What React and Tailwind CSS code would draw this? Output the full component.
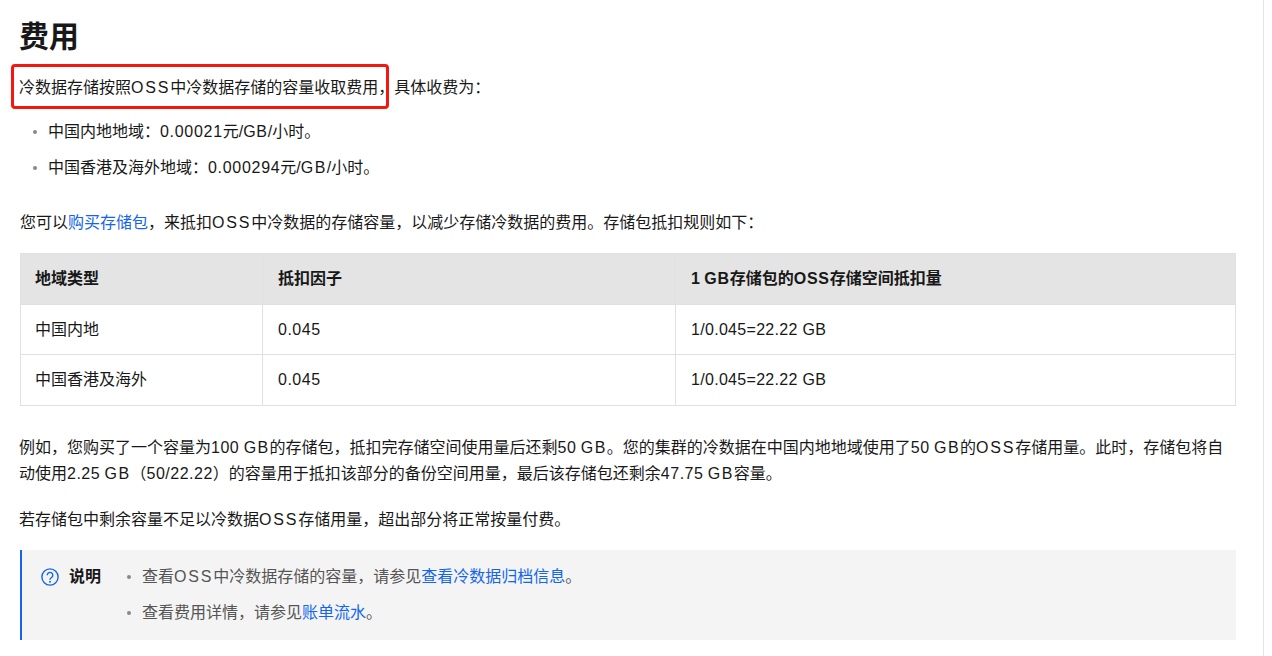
function Help() {
  return (
    <svg width="18" height="18" viewBox="0 0 18 18" fill="none" className="shrink-0">
      <circle cx="9" cy="9" r="8.1" stroke="#1366ec" strokeWidth="1.4" />
      <path d="M6.2 7.2a2.8 2.8 0 1 1 4.4 2.3c-.9.6-1.6 1.1-1.6 2.3" stroke="#1366ec" strokeWidth="1.4" />
      <circle cx="9" cy="13.8" r="1" fill="#1366ec" />
    </svg>
  );
}

const A = ({ children }) => <a className="text-[#1366ec]">{children}</a>;
// The reference's Latin face is wider than Liberation Sans: Latin runs get tracking.
const O = ({ children }) => <span className="tracking-[1.8px]">{children}</span>;
const G = ({ children }) => <span className="tracking-[1.4px]">{children}</span>;
const N = ({ children }) => <span className="tracking-[0.5px]">{children}</span>;
const T = ({ children }) => <span className="tracking-[0.7px]">{children}</span>;

function Bullet({ children }) {
  return (
    <li className="flex items-center">
      <span className="w-[4px] h-[4px] rounded-full bg-[#888] mr-[11px] shrink-0" />
      <span>{children}</span>
    </li>
  );
}

export default function App() {
  const rows = [
    { name: "中国内地", h: "h-[50px]" },
    { name: "中国香港及海外", h: "h-[51px]" },
  ];
  const td = "border border-[#e0e0e0] px-[15px]";
  const th = "border border-[#e0e0e0] px-[15px] text-left font-bold";
  return (
    <div className="relative w-[1272px] h-[656px] overflow-hidden bg-white text-[16px] leading-[26px] text-[#181818] font-['Liberation_Sans','Noto_Sans_CJK_SC',sans-serif]">
      <div className="absolute top-0 bottom-0 left-[1263px] w-[1px] bg-[#e5e5e5]" />
      <div className="absolute left-[11px] top-[64px] w-[378px] h-[45px] border-[3px] border-[#f5170f] rounded-[4px]" />
      <div className="w-[1236px] pl-[20px] flex flex-col">
        <h1 className="mt-[17px] -ml-[1px] text-[30px] leading-[40px] font-bold">费用</h1>
        <p className="mt-[18px] -ml-[1px]">冷数据存储按照<O>OSS</O>中冷数据存储的容量收取费用，具体收费为：</p>
        <ul className="mt-[18px] flex flex-col gap-[10px] pl-[13px]">
          <Bullet>中国内地地域：<T>0.00021</T>元/<T>GB</T>/小时。</Bullet>
          <Bullet>中国香港及海外地域：<T>0.000294</T>元/<G>GB</G>/小时。</Bullet>
        </ul>
        <p className="mt-[29px]">您可以<A>购买存储包</A>，来抵扣<O>OSS</O>中冷数据的存储容量，以减少存储冷数据的费用。存储包抵扣规则如下：</p>
        <table className="mt-[17px] w-[1216px] table-fixed border-collapse">
          <colgroup>
            <col className="w-[242px]" />
            <col className="w-[413px]" />
            <col />
          </colgroup>
          <thead>
            <tr className="h-[51px] bg-[#e4e4e4]">
              <th className="border border-[#e0e0e0] pl-[14px] pr-[15px] text-left font-bold">地域类型</th>
              <th className={th}>抵扣因子</th>
              <th className={th}>1 <T>GB</T>存储包的<T>OSS</T>存储空间抵扣量</th>
            </tr>
          </thead>
          <tbody>
            {rows.map((r) => (
              <tr key={r.name} className={r.h}>
                <td className="border border-[#e0e0e0] pl-[14px] pr-[15px]">{r.name}</td>
                <td className={td}><N>0.045</N></td>
                <td className={td}><span className="tracking-[0.3px]">1/0.045=22.22 GB</span></td>
              </tr>
            ))}
          </tbody>
        </table>
        <p className="mt-[29px] -ml-[1px]">例如，您购买了一个容量为<N>100</N> <G>GB</G>的存储包，抵扣完存储空间使用量后还剩<N>50</N> <G>GB</G>。您的集群的冷数据在中国内地地域使用了<N>50</N> <G>GB</G>的<O>OSS</O>存储用量。此时，存储包将自动使用<N>2.25</N> <G>GB</G>（<N>50/22.22</N>）的容量用于抵扣该部分的备份空间用量，最后该存储包还剩余<N>47.75</N> <G>GB</G>容量。</p>
        <p className="mt-[20px] -ml-[1px]">若存储包中剩余容量不足以冷数据<O>OSS</O>存储用量，超出部分将正常按量付费。</p>
        <div className="mt-[17px] h-[90px] flex border-l-2 border-[#1366ec] bg-[#f4f4f4] pl-[19px] pt-[14px]">
          <div className="flex items-center h-[26px] w-[86px] shrink-0">
            <Help />
            <b className="ml-[10px] font-bold">说明</b>
          </div>
          <ul className="flex flex-col gap-[10px] text-[#555]">
            <Bullet>查看<O>OSS</O>中冷数据存储的容量，请参见<A>查看冷数据归档信息</A>。</Bullet>
            <Bullet>查看费用详情，请参见<A>账单流水</A>。</Bullet>
          </ul>
        </div>
      </div>
    </div>
  );
}
